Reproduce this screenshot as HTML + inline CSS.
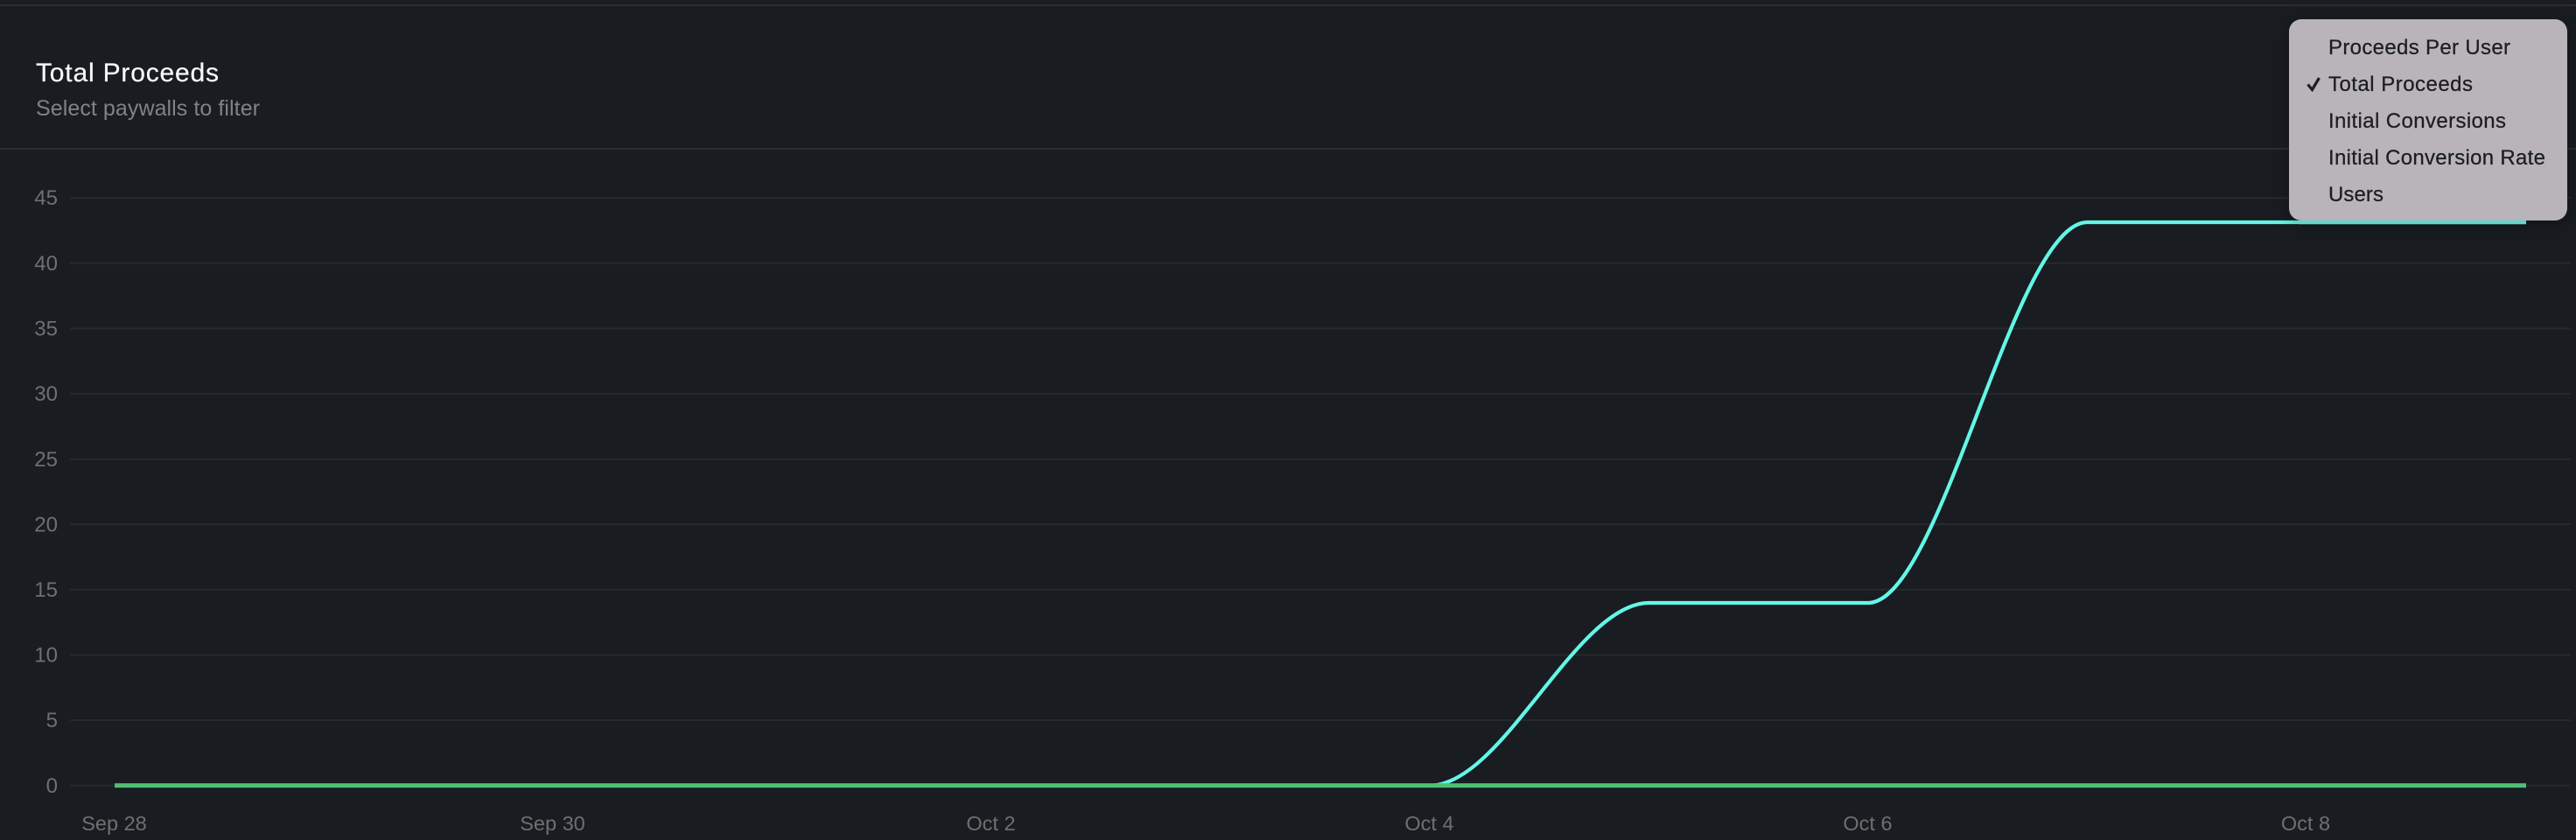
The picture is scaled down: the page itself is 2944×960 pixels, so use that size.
<!DOCTYPE html>
<html>
<head>
<meta charset="utf-8">
<style>
html,body{margin:0;padding:0;width:2944px;height:960px;overflow:hidden;background:#191c20}
svg{display:block;position:absolute;left:0;top:0}
text{font-family:"Liberation Sans",sans-serif}
#menu{position:absolute;left:2616px;top:22px;width:318px;height:230px;background:#b9b4b9;border-radius:14px;box-shadow:0 4px 22px rgba(0,0,0,.3)}
</style>
</head>
<body>
<svg width="2944" height="960" viewBox="0 0 2944 960">
  <rect x="0" y="5" width="2944" height="2" fill="#2a2d31"/>
  <rect x="0" y="169" width="2944" height="2" fill="#2b2f32"/>
  <text x="41" y="93" font-size="30" fill="#f6f7f7" stroke="#f6f7f7" stroke-width="0.250" textLength="209" lengthAdjust="spacing">Total Proceeds</text>
  <text x="41" y="132" font-size="25" fill="#7f8386" textLength="256" lengthAdjust="spacing">Select paywalls to filter</text>
  <g stroke="#27292d" stroke-width="2" fill="none">
    <path d="M80 226.3H2938M80 300.9H2938M80 375.5H2938M80 450.1H2938M80 524.7H2938M80 599.3H2938M80 673.9H2938M80 748.5H2938M80 823.1H2938M80 897.7H2938"/>
  </g>
  <g font-size="24" fill="#6c7170" text-anchor="end">
    <text x="66" y="234">45</text>
    <text x="66" y="309">40</text>
    <text x="66" y="383.500">35</text>
    <text x="66" y="458">30</text>
    <text x="66" y="533">25</text>
    <text x="66" y="607.500">20</text>
    <text x="66" y="682">15</text>
    <text x="66" y="756.500">10</text>
    <text x="66" y="831">5</text>
    <text x="66" y="906">0</text>
  </g>
  <g font-size="23.500" fill="#6c7170" text-anchor="middle">
    <text x="130.500" y="949">Sep 28</text>
    <text x="631.500" y="949">Sep 30</text>
    <text x="1132.500" y="949">Oct 2</text>
    <text x="1633.500" y="949">Oct 4</text>
    <text x="2134.500" y="949">Oct 6</text>
    <text x="2635" y="949">Oct 8</text>
  </g>
  <path d="M131 897.700H1634C1717.500 897.700 1801 689 1884.600 689H2135C2218.500 689 2302 254 2385.600 254H2887" fill="none" stroke="#62f7e8" stroke-width="4.200"/>
  <rect x="131" y="895.200" width="2756" height="5" fill="#4fbf73"/>
</svg>
<div id="menu"></div>
<svg width="2944" height="960" viewBox="0 0 2944 960">
  <rect x="2627" y="252" width="260" height="4.200" fill="#5ed9ca"/>
  <g font-size="24" fill="#1b1e22" stroke="#1b1e22" stroke-width="0.250">
    <text x="2661" y="62" textLength="208" lengthAdjust="spacing">Proceeds Per User</text>
    <text x="2661" y="104" textLength="165" lengthAdjust="spacing">Total Proceeds</text>
    <text x="2661" y="146" textLength="203" lengthAdjust="spacing">Initial Conversions</text>
    <text x="2661" y="188" textLength="248" lengthAdjust="spacing">Initial Conversion Rate</text>
    <text x="2661" y="230" textLength="63" lengthAdjust="spacing">Users</text>
  </g>
  <path d="M2637.500 96.500L2642.500 102.500L2650.500 89" fill="none" stroke="#1b1e22" stroke-width="3.200"/>
</svg>
</body>
</html>
